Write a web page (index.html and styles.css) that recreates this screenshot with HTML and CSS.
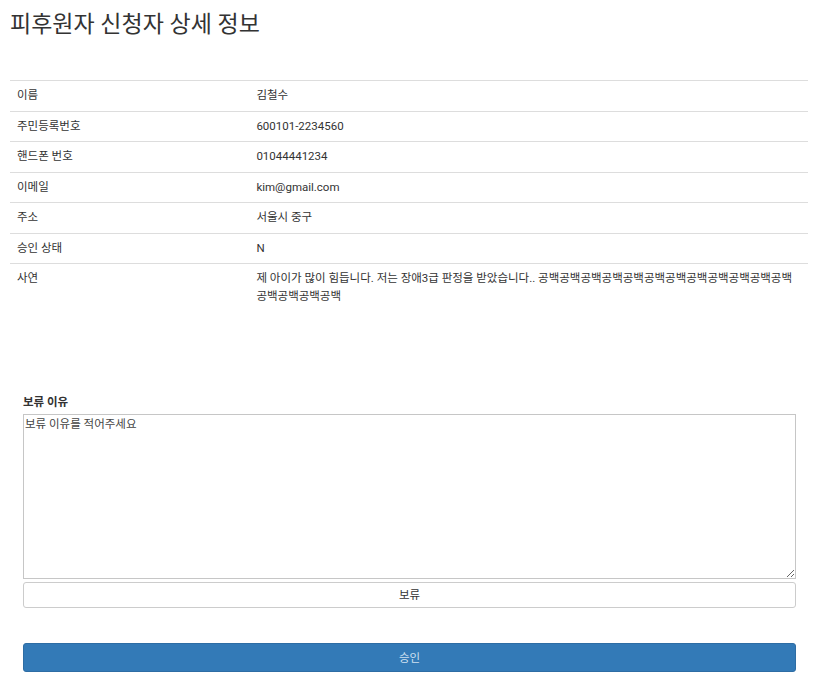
FILE: index.html
```html
<!DOCTYPE html>
<html lang="ko">
<head>
<meta charset="utf-8">
<title>피후원자 신청자 상세 정보</title>
<link rel="stylesheet" href="styles.css">
</head>
<body>
<div class="page">
  <h1 class="title">피후원자 신청자 상세 정보</h1>
  <table class="detail">
    <tr><th>이름</th><td>김철수</td></tr>
    <tr><th>주민등록번호</th><td>600101-2234560</td></tr>
    <tr><th>핸드폰 번호</th><td>01044441234</td></tr>
    <tr><th>이메일</th><td>kim@gmail.com</td></tr>
    <tr><th>주소</th><td>서울시 중구</td></tr>
    <tr><th>승인 상태</th><td>N</td></tr>
    <tr><th>사연</th><td>제 아이가 많이 힘듭니다. 저는 장애3급 판정을 받았습니다.. 공백공백공백공백공백공백공백공백공백공백공백공백공백공백공백공백</td></tr>
  </table>
  <form class="hold-form">
    <label class="hold-label" for="reason">보류 이유</label>
    <textarea id="reason" class="reason" placeholder="보류 이유를 적어주세요"></textarea>
    <button type="button" class="btn btn-default">보류</button>
    <button type="button" class="btn btn-primary">승인</button>
  </form>
</div>
</body>
</html>
```

FILE: styles.css
```css
html, body {
  margin: 0;
  padding: 0;
  background: #fff;
}
body {
  font-family: Roboto, "Noto Sans CJK KR", "Liberation Sans", sans-serif;
  font-size: 11.5px;
  color: #333;
}
.page {
  padding: 0 6px 0 10px;
}
.title {
  margin: 0;
  padding-top: 8px;
  font-size: 23px;
  font-weight: 400;
  line-height: 33px;
  color: #333;
}
.detail {
  width: 100%;
  margin-top: 39px;
  border-collapse: collapse;
}
.detail th,
.detail td {
  text-align: left;
  font-weight: 400;
  vertical-align: top;
  padding: 6px 7px;
  line-height: 17.5px;
  border-top: 1px solid #ddd;
}
.detail th {
  width: 30%;
}
.hold-form {
  display: flex;
  flex-direction: column;
  padding: 83px 12px 0 13px;
}
.hold-label {
  font-weight: 700;
  line-height: 16px;
  margin-bottom: 4px;
}
.reason {
  margin: 0;
  padding: 1px;
  border: 1px solid #c6c6c6;
  font-family: inherit;
  font-size: 11.5px;
  line-height: 16px;
  color: #333;
  resize: vertical;
  box-sizing: border-box;
  height: 165px;
}
.reason::placeholder {
  color: #444;
}
.btn {
  display: block;
  width: 100%;
  font-family: inherit;
  font-size: 11.5px;
  line-height: 16px;
  border-radius: 3px;
  cursor: pointer;
}
.btn-default {
  margin-top: 3px;
  height: 26px;
  background: #fff;
  border: 1px solid #ccc;
  color: #333;
}
.btn-primary {
  margin-top: 35px;
  height: 29px;
  background: #337ab7;
  border: 1px solid #2e6da4;
  color: #cfe0f0;
}
```
